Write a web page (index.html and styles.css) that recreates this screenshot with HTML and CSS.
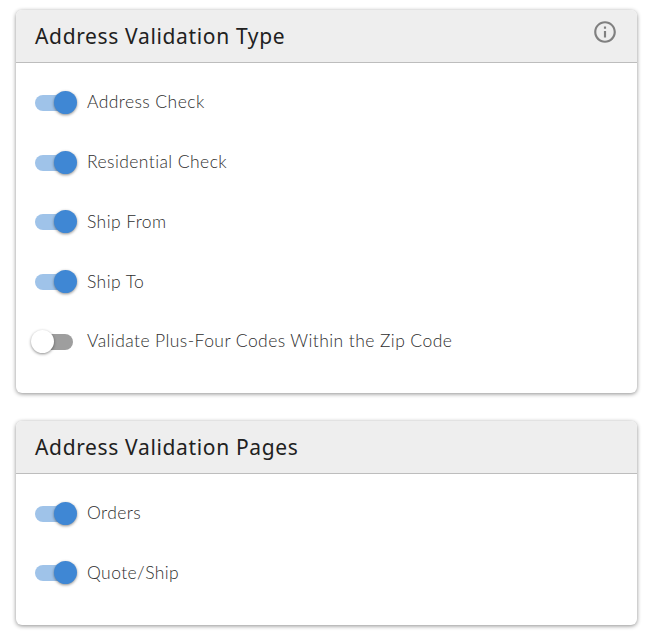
FILE: index.html
```html
<!DOCTYPE html>
<html lang="en">
<head>
    <meta charset="UTF-8">
    <meta name="viewport" content="width=device-width, initial-scale=1.0">
    <title>Address Validation</title>
    <link rel="stylesheet" href="styles.css">
</head>
<body>
    <div class="container">
        <section class="card">
            <div class="card-header">
                <h2>Address Validation Type</h2>
                <svg class="info-icon" viewBox="0 0 24 24" width="26" height="26">
                    <path d="M11 7h2v2h-2zm0 4h2v6h-2zm1-9C6.48 2 2 6.48 2 12s4.48 10 10 10 10-4.48 10-10S17.52 2 12 2zm0 18c-4.41 0-8-3.59-8-8s3.59-8 8-8 8 3.59 8 8-3.59 8-8 8z"/>
                </svg>
            </div>
            <div class="card-body">
                <div class="toggle-row"><span class="switch on"></span><span class="label">Address Check</span></div>
                <div class="toggle-row"><span class="switch on"></span><span class="label">Residential Check</span></div>
                <div class="toggle-row"><span class="switch on"></span><span class="label">Ship From</span></div>
                <div class="toggle-row"><span class="switch on"></span><span class="label">Ship To</span></div>
                <div class="toggle-row"><span class="switch"></span><span class="label">Validate Plus-Four Codes Within the Zip Code</span></div>
            </div>
        </section>

        <section class="card">
            <div class="card-header">
                <h2>Address Validation Pages</h2>
            </div>
            <div class="card-body">
                <div class="toggle-row"><span class="switch on"></span><span class="label">Orders</span></div>
                <div class="toggle-row"><span class="switch on"></span><span class="label">Quote/Ship</span></div>
            </div>
        </section>
    </div>
</body>
</html>
```

FILE: styles.css
```css
body {
    margin: 0;
    background-color: #fff;
    font-family: "Lato", "Liberation Sans", sans-serif;
}
.container {
    display: flex;
    flex-direction: column;
    gap: 27.75px;
    padding: 10px 11px 10px 16px;
}
.card {
    background-color: #fff;
    border-radius: 6px;
    box-shadow: 0 1px 4px rgba(0, 0, 0, 0.45);
    overflow: hidden;
}
.card-header {
    display: flex;
    justify-content: space-between;
    height: 52px;
    padding: 0 19px 0 19px;
    background-color: #eeeeee;
    border-bottom: 1px solid #bdbdbd;
}
.card-header h2 {
    margin: 0;
    font-family: "Noto Sans", sans-serif;
    font-size: 21px;
    font-weight: 400;
    line-height: 52px;
    letter-spacing: 0.65px;
    color: #212121;
}
.info-icon {
    margin-top: 9px;
    fill: #808080;
}
.card-body {
    display: flex;
    flex-direction: column;
    padding: 10px 0 21.25px 19px;
}
.toggle-row {
    display: flex;
    align-items: center;
    gap: 14px;
    height: 59.75px;
}
.label {
    padding-bottom: 2px;
    font-size: 17.5px;
    font-weight: 300;
    letter-spacing: 0.42px;
    color: #2e2e2e;
}
.switch {
    position: relative;
    width: 38px;
    height: 16px;
    border-radius: 8px;
    background-color: #9e9e9e;
}
.switch::after {
    content: "";
    position: absolute;
    top: -4px;
    left: -4px;
    width: 23px;
    height: 23px;
    border-radius: 50%;
    background-color: #fff;
    box-shadow: 0 1px 3px rgba(0, 0, 0, 0.45);
}
.switch.on {
    background-color: #9fc3e9;
}
.switch.on::after {
    left: 19px;
    background-color: #3f87d4;
}
```
